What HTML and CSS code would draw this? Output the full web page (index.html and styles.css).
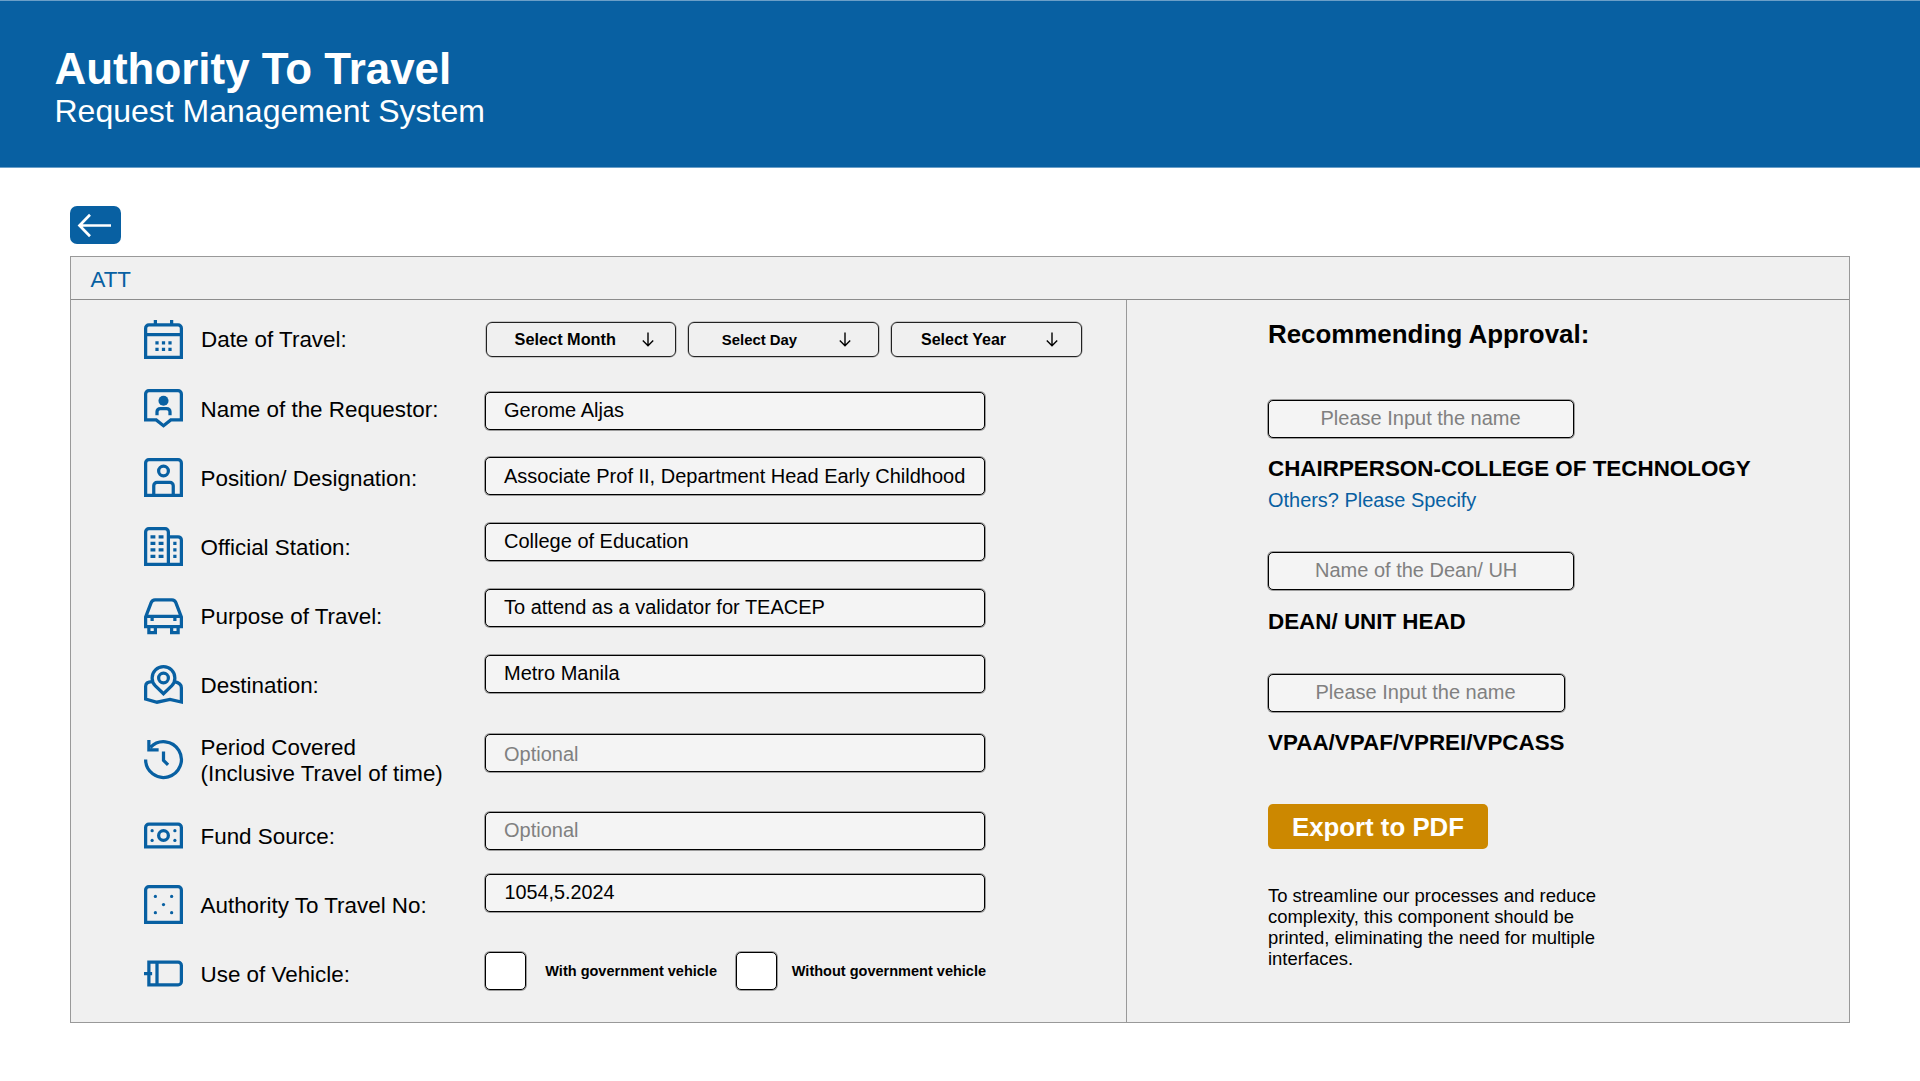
FILE: index.html
```html
<!DOCTYPE html>
<html lang="en">
<head>
<meta charset="utf-8">
<title>Authority To Travel</title>
<link rel="stylesheet" href="styles.css">
</head>
<body>
<header class="banner">
  <h1>Authority To Travel</h1>
  <p>Request Management System</p>
</header>
<main>
  <a class="back" aria-label="Back"><svg width="51" height="38" viewBox="0 0 51 38"><path d="M41 19.5H9.5M20 8.8L9.5 19.5L20 30.3"/></svg></a>
  <section class="panel">
    <div class="panel-head">ATT</div>
    <div class="panel-body">
      <div class="form">
        <div class="labels">
          <div class="label first"><svg class="icon" viewBox="0 0 24 24"><path d="M1 23V5a2 2 0 0 1 2-2h18a2 2 0 0 1 2 2v18zM1 9h22M7 0v3M17 0v3M7 14h2M11 14h2M15 14h2M7 18h2M11 18h2M15 18h2"/></svg><span>Date of Travel:</span></div>
          <div class="label"><svg class="icon" viewBox="0 0 24 24"><path d="M1 19V3a2 2 0 0 1 2-2h18a2 2 0 0 1 2 2v16h-6.5L12 22.6 7.5 19zM8 16.2V14a2 2 0 0 1 2-2h4a2 2 0 0 1 2 2v2.2"/><circle class="solid" cx="12" cy="7.2" r="3.1"/></svg><span>Name of the Requestor:</span></div>
          <div class="label"><svg class="icon" viewBox="0 0 24 24"><path d="M1 23V3a2 2 0 0 1 2-2h18a2 2 0 0 1 2 2v20zM6 23v-6a2 2 0 0 1 2-2h8a2 2 0 0 1 2 2v6"/><circle cx="12" cy="8" r="3"/></svg><span>Position/ Designation:</span></div>
          <div class="label"><svg class="icon" viewBox="0 0 24 24"><path d="M1 23V3a2 2 0 0 1 2-2h10a2 2 0 0 1 2 2v20M15 6h6a2 2 0 0 1 2 2v15M0 23h24M4 6h3M9 6h3M4 10h3M9 10h3M4 14h3M9 14h3M4 18h3M9 18h3M18 10h2M18 14h2M18 18h2"/></svg><span>Official Station:</span></div>
          <div class="label"><svg class="icon" viewBox="0 0 24 24"><path d="M1 18.8V13L4.4 4.1A2.6 2.6 0 0 1 6.8 2.4h10.4a2.6 2.6 0 0 1 2.4 1.7L23 13v5.8zM1 12.6h22M5 13v2.4M19 13v2.4M3 19v3.6h4V19M17 19v3.6h4V19"/></svg><span>Purpose of Travel:</span></div>
          <div class="label"><svg class="icon" viewBox="0 0 24 24"><path d="M12 17.7l-5-4.8a7 7 0 1 1 10 0zM5.2 10.2C2.6 10.2 1 11.2 1 13v8l7 1.9 8-1.7 7 1.6V14c0-2.200-1.400-3.300-4.400-3.800"/><circle cx="12" cy="8" r="3"/></svg><span>Destination:</span></div>
          <div class="label tall"><svg class="icon" viewBox="0 0 24 24"><path d="M1 12a11 11 0 1 0 3-7.500M3 0v6h6M12 7v5.500l2.800 2.800"/></svg><span>Period Covered<br>(Inclusive Travel of time)</span></div>
          <div class="label"><svg class="icon" viewBox="0 0 24 24"><path d="M1 19V7a2 2 0 0 1 2-2h18a2 2 0 0 1 2 2v12z"/><circle cx="12" cy="12" r="3"/><g class="solid"><circle cx="5" cy="9" r="1"/><circle cx="19" cy="9" r="1"/><circle cx="5" cy="15" r="1"/><circle cx="19" cy="15" r="1"/></g></svg><span>Fund Source:</span></div>
          <div class="label"><svg class="icon" viewBox="0 0 24 24"><path d="M1 23V3a2 2 0 0 1 2-2h18a2 2 0 0 1 2 2v20z"/><g class="solid"><circle cx="7" cy="7" r="1"/><circle cx="17" cy="7" r="1"/><circle cx="12" cy="12" r="1"/><circle cx="7" cy="17" r="1"/><circle cx="17" cy="17" r="1"/></g></svg><span>Authority To Travel No:</span></div>
          <div class="label"><svg class="icon" viewBox="0 0 24 24"><path d="M3 5h18a2 2 0 0 1 2 2v10a2 2 0 0 1-2 2H3zM8 5v14M0 12h5"/></svg><span>Use of Vehicle:</span></div>
        </div>
        <div class="fields">
          <div class="selects">
            <div class="select month"><span>Select Month</span><svg class="down" viewBox="0 0 12 15"><path d="M6 .5v13M.8 8.600L6 13.700l5.200-5.100"/></svg></div>
            <div class="select day"><span>Select Day</span><svg class="down" viewBox="0 0 12 15"><path d="M6 .5v13M.8 8.600L6 13.700l5.200-5.100"/></svg></div>
            <div class="select year"><span>Select Year</span><svg class="down" viewBox="0 0 12 15"><path d="M6 .5v13M.8 8.600L6 13.700l5.200-5.100"/></svg></div>
          </div>
          <div class="input name">Gerome Aljas</div>
          <div class="input position">Associate Prof II, Department Head Early Childhood</div>
          <div class="input">College of Education</div>
          <div class="input">To attend as a validator for TEACEP</div>
          <div class="input">Metro Manila</div>
          <div class="input period empty">Optional</div>
          <div class="input fund empty">Optional</div>
          <div class="input number">1054,5.2024</div>
          <div class="checks">
            <span class="box"></span><span class="check-text">With government vehicle</span>
            <span class="box"></span><span class="check-text">Without government vehicle</span>
          </div>
        </div>
      </div>
      <aside class="approval">
        <h2>Recommending Approval:</h2>
        <div class="input chair empty">Please Input the name</div>
        <h3>CHAIRPERSON-COLLEGE OF TECHNOLOGY</h3>
        <a class="others">Others? Please Specify</a>
        <div class="input dean empty">Name of the Dean/ UH</div>
        <h3>DEAN/ UNIT HEAD</h3>
        <div class="input vp empty">Please Input the name</div>
        <h3>VPAA/VPAF/VPREI/VPCASS</h3>
        <div class="export">Export to PDF</div>
        <p class="note">To streamline our processes and reduce complexity, this component should be printed, eliminating the need for multiple interfaces.</p>
      </aside>
    </div>
  </section>
</main>
</body>
</html>
```
FILE: styles.css
```css
* { box-sizing: border-box; }
body {
  margin: 0;
  height: 1081px;
  overflow: hidden;
  background: #fff;
  color: #000;
  font-family: "Liberation Sans", Arial, sans-serif;
}
h1, h2, h3, p { margin: 0; }

.banner {
  height: 168px;
  padding: 43px 0 0 54.500px;
  background: #0860a2;
  border-top: 1px solid #6b9fc8;
  border-bottom: 1px solid #6b9fc8;
  color: #fff;
}
.banner h1 { font-size: 43.900px; line-height: 49px; }
.banner p { font-size: 32px; line-height: 36px; }

main { padding: 38px 70px 0; }
.back {
  display: block;
  width: 51px;
  height: 38px;
  border-radius: 7px;
  background: #0860a2;
}
.back svg { display: block; fill: none; stroke: #fff; stroke-width: 2.700; }

.panel {
  width: 1780px;
  height: 767px;
  margin-top: 12px;
  border: 1px solid #999;
  background: #f0f0f0;
}
.panel-head {
  height: 43px;
  padding-left: 19.500px;
  border-bottom: 1px solid #8c8c8c;
  color: #0860a2;
  font-size: 22.300px;
  line-height: 45px;
}
.panel-body { display: flex; height: 722px; }
.form {
  display: flex;
  width: 1056px;
  padding-left: 73px;
  border-right: 1px solid #999;
}

.labels { width: 341px; padding-top: 6px; }
.label {
  display: flex;
  align-items: center;
  height: 69px;
  font-size: 22.420px;
  line-height: 26px;
}
.label.first span { padding: 0 0 1px .500px; }
.label.tall { height: 82px; }
.label.tall span { font-size: 22.370px; }
.icon {
  width: 39px;
  height: 39px;
  margin: -3px 17.500px 0 0;
  overflow: visible;
  fill: none;
  stroke: #0860a2;
  stroke-width: 2;
}
.icon .solid { fill: #0860a2; stroke: none; }

.fields { width: 600px; padding-top: 22px; }
.selects { display: flex; gap: 12px; padding-left: .6px; }
.select {
  display: flex;
  align-items: center;
  width: 190.700px;
  height: 35px;
  border: 1px solid #222;
  border-radius: 6px;
  box-shadow: 0 0 0 .5px rgba(0, 0, 0, .35);
  font-size: 16.300px;
  font-weight: 700;
  line-height: 20px;
}
.select span { white-space: nowrap; }
.month span { width: 126.500px; padding: 0 0 1px 28px; }
.day { font-size: 14.900px; }
.day span { width: 126px; padding-left: 32.500px; }
.year { font-size: 16px; }
.year span { width: 126px; padding-left: 29px; }
.down { width: 12px; height: 15px; fill: none; stroke: #000; stroke-width: 1.400; }
.month .down { margin-left: 28.500px; }
.day .down { margin-left: 24px; }
.year .down { margin-left: 28px; }

.input {
  width: 500px;
  height: 38px;
  margin-top: 28px;
  padding-left: 18px;
  border: 1px solid #000;
  border-radius: 5px;
  box-shadow: 0 0 0 1px rgba(0, 0, 0, .35);
  background: #f4f4f4;
  font-size: 20px;
  line-height: 34px;
  white-space: nowrap;
}
.empty { color: #808080; }
.fields .name { margin-top: 35px; line-height: 35px; }
.fields .position { margin-top: 27px; line-height: 36px; }
.fields .period { margin-top: 41px; line-height: 38px; }
.fields .fund { margin-top: 40px; line-height: 34px; }
.fields .number { margin-top: 24px; padding-left: 18.500px; font-size: 19.800px; }

.checks { display: flex; align-items: center; margin-top: 40px; }
.box {
  width: 41px;
  height: 38px;
  border: 1px solid #000;
  border-radius: 5px;
  box-shadow: 0 0 0 1px rgba(0, 0, 0, .35);
  background: #fff;
}
.check-text {
  width: 210.300px;
  padding-left: 19.300px;
  font-size: 14.530px;
  font-weight: 700;
  line-height: 18px;
  white-space: nowrap;
}
.box ~ .box + .check-text { padding-left: 14.500px; }

.approval { padding: 18px 0 0 141px; }
.approval h2 { font-size: 25.900px; line-height: 32px; }
.approval h3 { font-size: 22.400px; line-height: 26px; }
.approval .input { width: 306px; line-height: 35px; }
.approval .chair { margin-top: 50px; padding-left: 51.500px; }
.approval .chair + h3 { margin-top: 18px; }
.others { display: block; margin-top: 6px; color: #0860a2; font-size: 19.950px; line-height: 24px; }
.approval .dean { margin-top: 40px; padding-left: 46px; }
.approval .dean + h3 { margin-top: 19px; }
.approval .vp { width: 297px; margin-top: 39px; padding-left: 46.500px; }
.approval .vp + h3 { margin-top: 18px; }
.export {
  width: 220px;
  height: 45px;
  margin-top: 47.500px;
  padding-left: 24px;
  border-radius: 5px;
  background: #cc8800;
  color: #fff;
  font-size: 25.800px;
  font-weight: 700;
  line-height: 46px;
}
.note { width: 345px; margin-top: 36px; font-size: 18.450px; line-height: 21.100px; }
```
